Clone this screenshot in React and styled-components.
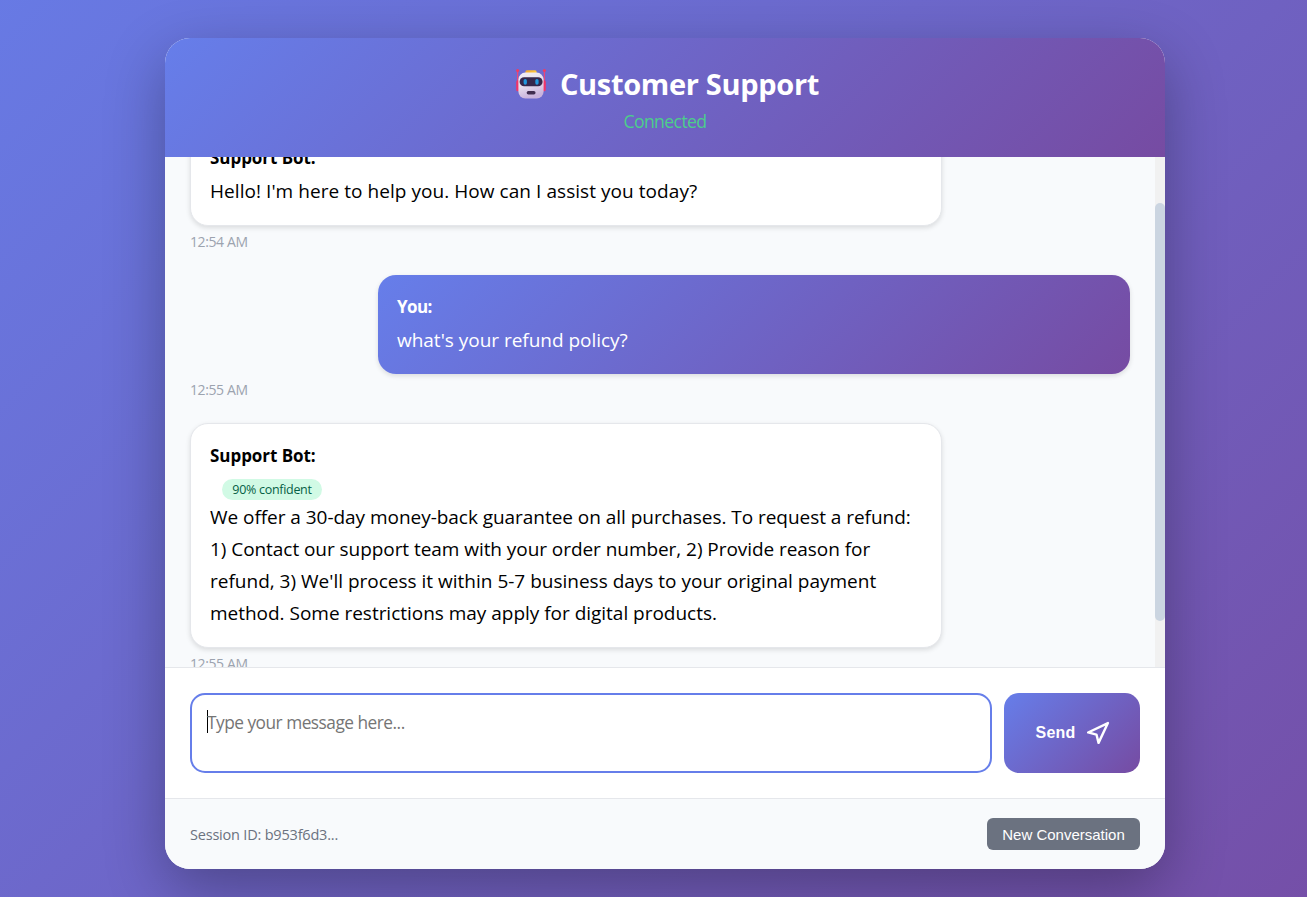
import React, { useLayoutEffect, useRef } from 'react';
import styled, { createGlobalStyle, css } from 'styled-components';

const brand = 'linear-gradient(135deg, #667eea 0%, #764ba2 100%)';

const GlobalStyle = createGlobalStyle`
  * { box-sizing: border-box; margin: 0; padding: 0; }
  body {
    font-family: 'Open Sans', 'Noto Sans', sans-serif;
    height: 897px;
    overflow: hidden;
  }
`;

const Page = styled.div`
  display: flex;
  justify-content: center;
  padding: 38px 0 0 23px;
  height: 897px;
  background: linear-gradient(135deg, #667eea -10%, #764ba2 110%);
`;

const Card = styled.main`
  display: flex;
  flex-direction: column;
  width: 1000px;
  height: 831px;
  background: #fff;
  border-radius: 25px;
  overflow: hidden;
  box-shadow: 0 20px 60px rgba(0, 0, 0, 0.3);
`;

const Header = styled.header`
  flex: none;
  height: 119px;
  padding-top: 24px;
  display: flex;
  flex-direction: column;
  align-items: center;
  background: ${brand};
  color: #fff;
`;

const Title = styled.h1`
  display: flex;
  align-items: center;
  gap: 13px;
  height: 43px;
  margin-bottom: 2px;
  padding-left: 4px;
  font-size: 29px;
  line-height: 43px;
  font-weight: 700;
  white-space: nowrap;
  letter-spacing: -0.32px;
`;

const Status = styled.p`
  font-size: 17.6px;
  line-height: 28px;
  color: #4cce8b;
  letter-spacing: -0.6px;
`;

const Body = styled.section`
  flex: none;
  display: flex;
  height: 510px;
  background: #f8fafc;
`;

const List = styled.div`
  flex: 1;
  padding: 25px;
  overflow: hidden;
`;

const Track = styled.div`
  width: 10px;
  background: #f1f1f1;
`;

const Thumb = styled.div`
  margin-top: 46px;
  height: 418px;
  border-radius: 5px;
  background: #cbd5e1;
`;

const Bubble = styled.article`
  width: 752px;
  padding: 18px 19px;
  border-radius: 18px;
  font-size: 19px;
  line-height: 32px;
  color: #000;
  background: #fff;
  border: 1px solid #e5e7eb;
  box-shadow: 0 2px 5px rgba(0, 0, 0, 0.12);
  ${(p) =>
    p.$mine &&
    css`
      margin-left: auto;
      border: 0;
      color: #fff;
      background: ${brand};
    `}
`;

const Author = styled.strong`
  display: block;
  height: 31px;
  font-size: 17px;
  line-height: 27px;
  letter-spacing: ${(p) => (p.$mine ? -0.6 : -0.05)}px;
`;

const BadgeRow = styled.div`
  display: flex;
  height: 28px;
  padding: 6px 0 1px 12px;
`;

const Badge = styled.span`
  width: 100px;
  text-align: center;
  border-radius: 12px;
  background: #d1fae5;
  color: #065f46;
  font-size: 12.5px;
  line-height: 21px;
  letter-spacing: -0.3px;
`;

const Line = styled.span`
  display: block;
  white-space: nowrap;
  letter-spacing: ${(p) => p.$track || 0}px;
`;

const Time = styled.time`
  display: block;
  margin: 5px 0 22px;
  font-size: 14px;
  line-height: 22px;
  color: #9ca3af;
  letter-spacing: -0.4px;
`;

const Composer = styled.div`
  flex: none;
  display: flex;
  gap: 12px;
  height: 131px;
  padding: 25px;
  border-top: 1px solid #e5e7eb;
`;

const Field = styled.div`
  flex: 1;
  display: flex;
  align-items: flex-start;
  height: 80px;
  padding: 15px;
  border: 2px solid #667eea;
  border-radius: 15px;
  font-size: 17.3px;
  line-height: 26px;
  color: #757575;
  letter-spacing: -0.5px;
`;

const Caret = styled.i`
  width: 1px;
  height: 23px;
  margin-right: -1px;
  background: #000;
`;

const SendButton = styled.button`
  display: flex;
  align-items: center;
  justify-content: center;
  gap: 10px;
  width: 136px;
  height: 80px;
  padding-left: 2px;
  border: 0;
  border-radius: 15px;
  background: ${brand};
  color: #fff;
  font: 700 16px 'Liberation Sans', sans-serif;
  letter-spacing: 0.2px;
`;

const Footer = styled.footer`
  flex: 1;
  display: flex;
  align-items: center;
  justify-content: space-between;
  padding: 0 25px;
  border-top: 1px solid #e5e7eb;
  background: #f8fafc;
  font-size: 14.5px;
  color: #6b7280;
  letter-spacing: -0.2px;
`;

const ResetButton = styled.button`
  width: 153px;
  height: 32px;
  border: 0;
  border-radius: 6px;
  background: #6b7280;
  color: #fff;
  font: 400 15px 'Liberation Sans', sans-serif;
`;

const Robot = () => (
  <svg width="32" height="32" viewBox="0 0 32 32">
    <defs>
      <linearGradient id="face" x1="0" y1="0" x2="0.3" y2="1">
        <stop offset="0" stopColor="#f4eff5" />
        <stop offset="0.55" stopColor="#e5dcec" />
        <stop offset="1" stopColor="#c9b2dc" />
      </linearGradient>
      <linearGradient id="cap" x1="0" y1="0" x2="1" y2="0">
        <stop offset="0" stopColor="#f2a82e" />
        <stop offset="1" stopColor="#ffc83d" />
      </linearGradient>
    </defs>
    <path d="M2.6 2.5V20M29.4 2.5V20" stroke="#e8467c" strokeWidth="1.3" />
    <circle cx="2.6" cy="2.5" r="1.5" fill="#f23b62" />
    <circle cx="29.4" cy="2.5" r="1.5" fill="#f23b62" />
    <rect x="1.2" y="12.3" width="3.6" height="11" rx="1.6" fill="#f0356a" />
    <rect x="27.2" y="12.3" width="3.6" height="11" rx="1.6" fill="#f0356a" />
    <rect x="10.4" y="2.2" width="11.2" height="5" rx="1.5" fill="url(#cap)" />
    <rect x="3.4" y="4.6" width="25.2" height="26" rx="7" fill="url(#face)" />
    <rect x="4.6" y="9.3" width="23" height="9" rx="4.5" fill="#35274b" />
    <rect x="8.6" y="11.1" width="3.3" height="5.6" rx="1.6" fill="#2097dc" />
    <rect x="20.3" y="11.1" width="3.3" height="5.6" rx="1.6" fill="#2097dc" />
    <rect x="11.7" y="23" width="8.8" height="3.4" rx="1.6" fill="#402d50" />
  </svg>
);

const SendIcon = () => (
  <svg
    width="25"
    height="25"
    viewBox="0 0 24 24"
    fill="none"
    stroke="currentColor"
    strokeWidth="2.3"
    strokeLinecap="round"
    strokeLinejoin="round"
  >
    <polygon points="3 11 22 2 13 21 11 13 3 11" />
  </svg>
);

const messages = [
  {
    author: 'Support Bot:',
    time: '12:54 AM',
    lines: [["Hello! I'm here to help you. How can I assist you today?", 0.055]],
  },
  {
    author: 'You:',
    mine: true,
    time: '12:55 AM',
    lines: [["what's your refund policy?", -0.02]],
  },
  {
    author: 'Support Bot:',
    badge: '90% confident',
    time: '12:55 AM',
    lines: [
      ['We offer a 30-day money-back guarantee on all purchases. To request a refund:', -0.04],
      ['1) Contact our support team with your order number, 2) Provide reason for', -0.055],
      ["refund, 3) We'll process it within 5-7 business days to your original payment", 0],
      ['method. Some restrictions may apply for digital products.', -0.02],
    ],
  },
];

export default function App() {
  const list = useRef(null);
  useLayoutEffect(() => {
    list.current.scrollTop = 57;
  }, []);

  return (
    <>
      <GlobalStyle />
      <Page>
        <Card>
          <Header>
            <Title>
              <Robot />
              <span>Customer Support</span>
            </Title>
            <Status>Connected</Status>
          </Header>
          <Body>
            <List ref={list}>
              {messages.map((m, i) => (
                <React.Fragment key={i}>
                  <Bubble $mine={m.mine}>
                    <Author $mine={m.mine}>{m.author}</Author>
                    {m.badge && (
                      <BadgeRow>
                        <Badge>{m.badge}</Badge>
                      </BadgeRow>
                    )}
                    {m.lines.map(([text, track]) => (
                      <Line key={text} $track={track}>
                        {text}
                      </Line>
                    ))}
                  </Bubble>
                  <Time>{m.time}</Time>
                </React.Fragment>
              ))}
            </List>
            <Track>
              <Thumb />
            </Track>
          </Body>
          <Composer>
            <Field>
              <Caret />
              <span>Type your message here...</span>
            </Field>
            <SendButton>
              Send
              <SendIcon />
            </SendButton>
          </Composer>
          <Footer>
            <span>Session ID: b953f6d3...</span>
            <ResetButton>New Conversation</ResetButton>
          </Footer>
        </Card>
      </Page>
    </>
  );
}
